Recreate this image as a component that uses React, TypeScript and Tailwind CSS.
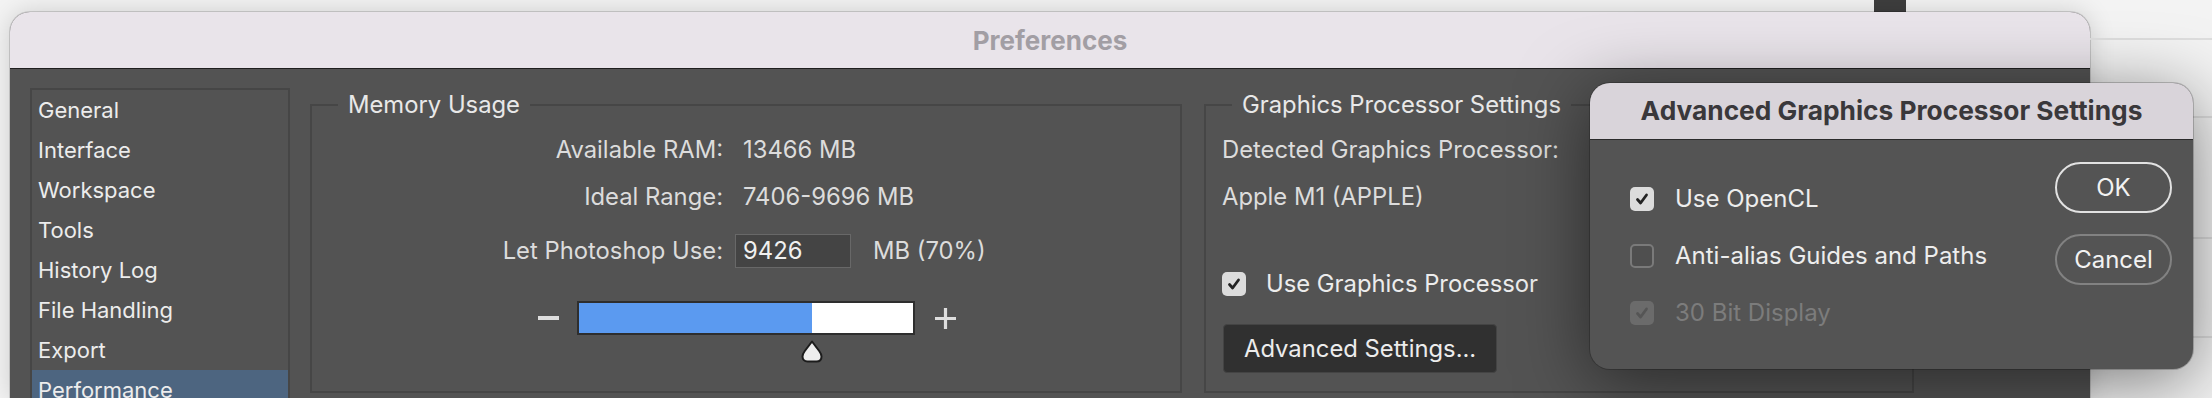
import React from "react";

type CheckState = "on" | "off" | "disabled";

function CheckBox({ state }: { state: CheckState }) {
  if (state === "off") {
    return <div className="h-[24px] w-[24px] shrink-0 rounded-[5px] border-2 border-[#7a7a7a] bg-[#4f4f4f]" />;
  }
  const box = state === "on" ? "bg-[#dcdcdc]" : "bg-[#6b6b6b]";
  const stroke = state === "on" ? "#232323" : "#555555";
  return (
    <div className={`flex h-[24px] w-[24px] shrink-0 items-center justify-center rounded-[5px] ${box}`}>
      <svg width="16" height="16" viewBox="0 0 16 16">
        <path d="M3.5 8.5 L6.6 12 L12.5 4" fill="none" stroke={stroke} strokeWidth="2.8" strokeLinecap="round" strokeLinejoin="round" />
      </svg>
    </div>
  );
}

const sidebarItems = [
  "General",
  "Interface",
  "Workspace",
  "Tools",
  "History Log",
  "File Handling",
  "Export",
  "Performance",
];

function Sidebar() {
  return (
    <div className="flex h-[340px] w-[260px] shrink-0 flex-col border-2 border-[#464646]">
      {sidebarItems.map((item) => (
        <div
          key={item}
          className={`flex h-[40px] shrink-0 items-center pl-[6px] text-[22px] text-[#ececec] ${
            item === "Performance" ? "bg-[#4d6580]" : ""
          }`}
        >
          {item}
        </div>
      ))}
    </div>
  );
}

function MemoryUsage() {
  return (
    <fieldset className="mt-[3px] h-[302px] w-[872px] shrink-0 border-2 border-[#464646]">
      <legend className="ml-[26px] px-[10px] text-[23.8px] leading-[28px] text-[#e8e8e8]">Memory Usage</legend>
      <div className="flex flex-col pt-[7px] text-[23.8px] text-[#dcdcdc]">
        <div className="flex h-[48px] items-center">
          <span className="w-[411px] text-right">Available RAM:</span>
          <span className="ml-[12px] pl-[8px]">13466 MB</span>
        </div>
        <div className="flex h-[46px] items-center">
          <span className="w-[411px] text-right">Ideal Range:</span>
          <span className="ml-[12px] pl-[8px]">7406-9696 MB</span>
        </div>
        <div className="mt-[10px] flex h-[42px] items-center">
          <span className="w-[411px] text-right">Let Photoshop Use:</span>
          <div className="ml-[12px] flex h-[34px] w-[116px] items-center border border-[#686868] bg-[#444444] pl-[7px] text-[#f0f0f0]">
            9426
          </div>
          <span className="ml-[22px]">MB (70%)</span>
        </div>
        <div className="mt-[29px] flex items-start pl-[226px]">
          <div className="flex h-[34px] w-[21px] items-center">
            <div className="h-[4px] w-full bg-[#dedede]" />
          </div>
          <div className="ml-[18px] flex flex-col">
            <div className="flex h-[34px] w-[338px] border-2 border-[#2e2e2e] bg-white">
              <div className="h-full w-[233px] bg-[#5b9af0]" />
            </div>
            <div className="ml-[223px] mt-[5px]">
              <svg width="24" height="23" viewBox="0 0 24 23">
                <path
                  d="M12 1.5 L19.2 11 C20.6 12.9 21.5 14.4 21.5 16.5 C21.5 19.6 19.6 21.5 16.5 21.5 L7.5 21.5 C4.4 21.5 2.5 19.6 2.5 16.5 C2.5 14.4 3.4 12.9 4.8 11 Z"
                  fill="#eeeeee"
                  stroke="#1c1c1c"
                  strokeWidth="2"
                  strokeLinejoin="round"
                />
              </svg>
            </div>
          </div>
          <div className="ml-[19px] flex h-[34px] w-[23px] items-center justify-center">
            <svg width="23" height="23" viewBox="0 0 23 23">
              <path d="M11.5 1 V22 M1 11.5 H22" stroke="#dedede" strokeWidth="3.2" />
            </svg>
          </div>
        </div>
      </div>
    </fieldset>
  );
}

function GraphicsSettings() {
  return (
    <fieldset className="ml-[2px] mt-[3px] h-[302px] w-[710px] shrink-0 border-2 border-[#464646]">
      <legend className="ml-[26px] px-[10px] text-[23.8px] leading-[28px] text-[#e8e8e8]">Graphics Processor Settings</legend>
      <div className="flex flex-col pl-[16px] pt-[7px] text-[23.8px] text-[#dcdcdc]">
        <div className="flex h-[48px] items-center">Detected Graphics Processor:</div>
        <div className="flex h-[46px] items-center">Apple M1 (APPLE)</div>
        <div className="mt-[52px] flex h-[24px] items-center gap-[20px] text-[#ececec]">
          <CheckBox state="on" />
          <span>Use Graphics Processor</span>
        </div>
        <button className="ml-[1px] mt-[28px] flex h-[49px] w-[274px] items-center rounded-[4px] border border-[#444444] bg-[#303030] pl-[20px] text-[23.8px] text-[#ececec]">
          Advanced Settings...
        </button>
      </div>
    </fieldset>
  );
}

function Window() {
  return (
    <div className="ml-[10px] flex flex-1 flex-col overflow-hidden rounded-t-[20px] bg-[#535353] shadow-[0_0_26px_rgba(0,0,0,0.16),0_0_0_1px_rgba(0,0,0,0.14)]">
      <div className="flex h-[57px] shrink-0 items-center justify-center border-b border-[#1f1f1f] bg-[#e9e4ea] text-[26px] font-bold text-[#a29ea4]">
        Preferences
      </div>
      <div className="flex items-start gap-[20px] pl-[20px] pt-[19px]">
        <Sidebar />
        <MemoryUsage />
        <GraphicsSettings />
      </div>
    </div>
  );
}

function Dialog() {
  return (
    <div className="absolute left-[1590px] top-[83px] flex h-[286px] w-[603px] flex-col overflow-hidden rounded-[20px] bg-[#545454] shadow-[0_12px_70px_rgba(0,0,0,0.5),0_0_0_1px_rgba(0,0,0,0.2)]">
      <div className="flex h-[57px] shrink-0 items-center justify-center border-b border-[#2b2b2b] bg-[#d9d4da] text-[26.3px] font-bold text-[#3a383b]">
        Advanced Graphics Processor Settings
      </div>
      <div className="flex justify-between pl-[40px] pr-[21px] pt-[22px] text-[24px]">
        <div className="flex flex-col gap-[33px] pt-[25px]">
          <div className="flex h-[24px] items-center gap-[21px] text-[#ededed]">
            <CheckBox state="on" />
            <span>Use OpenCL</span>
          </div>
          <div className="flex h-[24px] items-center gap-[21px] text-[#ededed]">
            <CheckBox state="off" />
            <span>Anti-alias Guides and Paths</span>
          </div>
          <div className="flex h-[24px] items-center gap-[21px] text-[#7c7c7c]">
            <CheckBox state="disabled" />
            <span>30 Bit Display</span>
          </div>
        </div>
        <div className="flex flex-col gap-[21px]">
          <button className="flex h-[51px] w-[117px] items-center justify-center rounded-full border-2 border-[#e2e2e2] text-[24px] text-[#f2f2f2]">
            OK
          </button>
          <button className="flex h-[51px] w-[117px] items-center justify-center rounded-full border-2 border-[#828282] text-[24px] text-[#f2f2f2]">
            Cancel
          </button>
        </div>
      </div>
    </div>
  );
}

export default function App() {
  return (
    <div className="relative flex h-[398px] w-[2212px] overflow-hidden bg-[#f3f3f3] font-[Inter,sans-serif] antialiased">
      <div className="flex w-[2090px] shrink-0 flex-col">
        <div className="h-[12px] shrink-0">
          <div className="ml-[1874px] h-full w-[32px] bg-[#3e3e3e]" />
        </div>
        <Window />
      </div>
      <div className="flex flex-1 flex-col">
        <div className="mt-[38px] h-[2px] bg-[#dedede]" />
        <div className="mt-[76px] h-[2px] bg-[#dedede]" />
        <div className="mt-[119px] h-[2px] bg-[#dedede]" />
        <div className="mt-[97px] h-[2px] bg-[#dedede]" />
      </div>
      <Dialog />
    </div>
  );
}
